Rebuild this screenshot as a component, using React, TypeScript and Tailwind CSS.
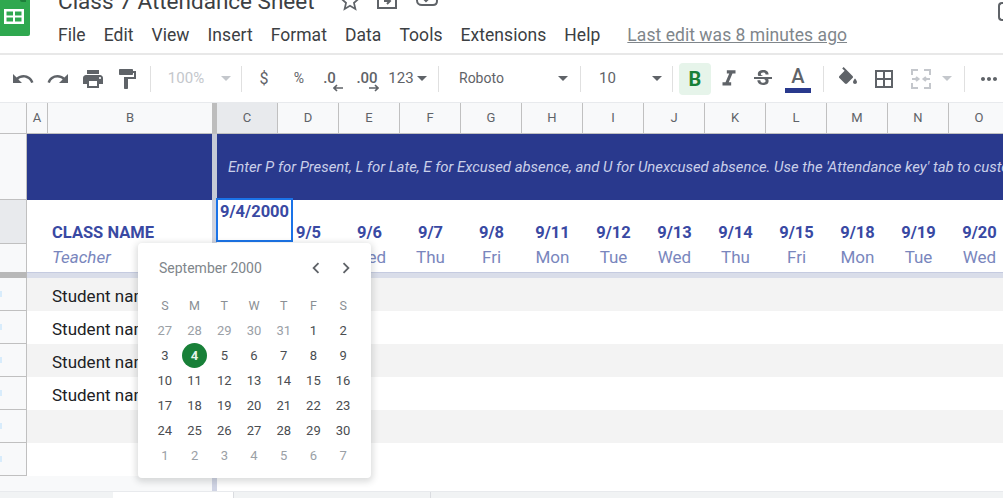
import React from 'react';
import {
    MdBorderAll,
    MdChevronLeft,
    MdChevronRight,
    MdFormatItalic,
    MdFormatPaint,
    MdMoreHoriz,
    MdPrint,
    MdRedo,
    MdStarBorder,
    MdStrikethroughS,
    MdUndo,
} from 'react-icons/md';

const columns = ['C', 'D', 'E', 'F', 'G', 'H', 'I', 'J', 'K', 'L', 'M', 'N', 'O'];

const dates = [
    ['', ''],
    ['9/5', 'Tue'],
    ['9/6', 'Wed'],
    ['9/7', 'Thu'],
    ['9/8', 'Fri'],
    ['9/11', 'Mon'],
    ['9/12', 'Tue'],
    ['9/13', 'Wed'],
    ['9/14', 'Thu'],
    ['9/15', 'Fri'],
    ['9/18', 'Mon'],
    ['9/19', 'Tue'],
    ['9/20', 'Wed'],
];

const rows = ['Student name', 'Student name', 'Student name', 'Student name', '', ''];

const menu = ['File', 'Edit', 'View', 'Insert', 'Format', 'Data', 'Tools', 'Extensions', 'Help'];

const weeks = [
    [27, 28, 29, 30, 31, 1, 2],
    [3, 4, 5, 6, 7, 8, 9],
    [10, 11, 12, 13, 14, 15, 16],
    [17, 18, 19, 20, 21, 22, 23],
    [24, 25, 26, 27, 28, 29, 30],
    [1, 2, 3, 4, 5, 6, 7],
];

function Caret({ light }: { light?: boolean }) {
    return (
        <span
            className={`block h-0 w-0 border-x-[5px] border-t-[5px] border-x-transparent ${
                light ? 'border-t-[#c4c7cc]' : 'border-t-[#5f6368]'
            }`}
        />
    );
}

function Sep({ className }: { className: string }) {
    return <div className={`h-[26px] w-px shrink-0 bg-[#e0e0e0] ${className}`} />;
}

function Logo() {
    return (
        <svg width="31" height="37" viewBox="0 0 31 37" className="shrink-0">
            <path d="M0 0H30V34Q30 36 28 36H0Z" fill="#2fa84f" />
            <path d="M20 0H26V2H22Q20 2 20 0Z" fill="#1e7e3a" />
            <path fillRule="evenodd" d="M4 9H24V24H4ZM6.5 11.5V15.5H13V11.5ZM15 11.5V15.5H21.5V11.5ZM6.5 17.5V21.5H13V17.5ZM15 17.5V21.5H21.5V17.5Z" fill="#fff" />
        </svg>
    );
}

function Toolbar() {
    const icon = 'flex shrink-0 items-center justify-center text-[#5f6368]';
    return (
        <div className="flex h-[48px] items-center border-b border-[#e8eaed] pl-[5px] text-[#5f6368]">
            <div className={`${icon} w-[35px]`}><MdUndo size={24} /></div>
            <div className={`${icon} w-[35px]`}><MdRedo size={24} /></div>
            <div className={`${icon} w-[35px]`}><MdPrint size={24} /></div>
            <div className={`${icon} w-[34px]`}><MdFormatPaint size={24} /></div>
            <Sep className="ml-[6px]" />
            <div className="w-[70px] shrink-0 text-center text-[15px] text-[#c4c7cc]">100%</div>
            <div className="flex w-[10px] shrink-0 justify-center"><Caret light /></div>
            <Sep className="ml-[10px]" />
            <div className="w-[44px] shrink-0 text-center text-[16px]">$</div>
            <div className="w-[26px] shrink-0 text-center text-[14px]">%</div>
            <div className="relative w-[35px] shrink-0 text-center text-[15px] font-medium">
                .0
                <svg width="10" height="8" viewBox="0 0 10 8" className="absolute left-[21px] top-[17px]">
                    <path d="M10 4H2M4 1L1 4L4 7" fill="none" stroke="#5f6368" strokeWidth="1.6" />
                </svg>
            </div>
            <div className="relative w-[40px] shrink-0 text-center text-[15px] font-medium">
                .00
                <svg width="10" height="8" viewBox="0 0 10 8" className="absolute left-[22px] top-[17px]">
                    <path d="M0 4H8M6 1L9 4L6 7" fill="none" stroke="#5f6368" strokeWidth="1.6" />
                </svg>
            </div>
            <div className="w-[28px] shrink-0 text-center text-[15px]">123</div>
            <div className="flex w-[13px] shrink-0 justify-center"><Caret /></div>
            <Sep className="ml-[10px]" />
            <div className="w-[111px] shrink-0 pl-[20px] text-[14px] text-[#5f6368]">Roboto</div>
            <div className="flex w-[26px] shrink-0 justify-center"><Caret /></div>
            <Sep className="ml-[4px]" />
            <div className="w-[68px] shrink-0 pl-[18px] text-[15px]">10</div>
            <div className="flex w-[16px] shrink-0 justify-center"><Caret /></div>
            <Sep className="ml-[7px]" />
            <div className="ml-[6px] flex h-[32px] w-[32px] shrink-0 items-center justify-center rounded bg-[#e6f4ea] text-[20px] font-bold text-[#188038]">B</div>
            <div className={`${icon} w-[36px]`}><MdFormatItalic size={26} /></div>
            <div className={`${icon} w-[32px]`}><MdStrikethroughS size={24} /></div>
            <div className="flex w-[38px] shrink-0 flex-col items-center">
                <span className="text-[20px] font-medium leading-[24px]">A</span>
                <span className="h-[5px] w-[26px] bg-[#29398d]" />
            </div>
            <Sep className="ml-[6px]" />
            <div className={`${icon} ml-[6px] w-[36px]`}>
                <svg width="24" height="24" viewBox="0 0 24 24" fill="#5f6368">
                    <path d="M16.56 8.94L7.62 0 6.21 1.41l2.38 2.38-5.15 5.15c-.59.59-.59 1.54 0 2.12l5.5 5.5c.29.29.68.44 1.06.44s.77-.15 1.06-.44l5.5-5.5c.59-.58.59-1.53 0-2.12z" />
                    <path d="M19 11.5s-2 2.17-2 3.5c0 1.1.9 2 2 2s2-.9 2-2c0-1.33-2-3.5-2-3.5z" />
                </svg>
            </div>
            <div className={`${icon} w-[36px]`}><MdBorderAll size={24} /></div>
            <div className={`${icon} w-[38px]`}>
                <svg width="24" height="24" viewBox="0 0 24 24" fill="none" stroke="#c4c7cc" strokeWidth="2">
                    <path d="M3 8V3H9M15 3H21V8M3 16V21H9M15 21H21V16M3 12H9M7 10L9.5 12L7 14M21 12H15M17 10L14.5 12L17 14" />
                </svg>
            </div>
            <div className="flex w-[14px] shrink-0 justify-center"><Caret light /></div>
            <Sep className="ml-[10px]" />
            <div className={`${icon} ml-[12px] w-[24px]`}><MdMoreHoriz size={24} /></div>
        </div>
    );
}

function DatePopup() {
    return (
        <div className="absolute left-[138px] top-[243px] z-20 h-[235px] w-[233px] rounded bg-white shadow-[0_2px_6px_2px_rgba(60,64,67,0.18)]">
            <div className="flex h-[50px] items-center justify-between pl-[21px] pr-[10px] text-[#5f6368]">
                <span className="text-[14px] text-[#80868b]">September 2000</span>
                <div className="flex">
                    <div className="flex w-[30px] justify-center"><MdChevronLeft size={22} /></div>
                    <div className="flex w-[30px] justify-center"><MdChevronRight size={22} /></div>
                </div>
            </div>
            <div className="ml-[12px] grid w-[208px] grid-cols-7 text-center text-[13px] leading-[25px]">
                {['S', 'M', 'T', 'W', 'T', 'F', 'S'].map((d, i) => (
                    <div key={i} className="text-[12.5px] text-[#8a8f94]">{d}</div>
                ))}
                {weeks.map((week, w) =>
                    week.map((d, i) => {
                        const muted = w === 5 || (w === 0 && i < 5);
                        const picked = w === 1 && d === 4;
                        return (
                            <div key={`${w}-${i}`} className={`flex h-[25px] items-center justify-center ${muted ? 'text-[#9aa0a6]' : 'text-[#4a4d51]'}`}>
                                {picked ? (
                                    <span className="flex h-[25px] w-[25px] items-center justify-center rounded-full bg-[#188038] font-bold text-[#e6f4ea]">{d}</span>
                                ) : (
                                    d
                                )}
                            </div>
                        );
                    }),
                )}
            </div>
        </div>
    );
}

export default function App() {
    return (
        <div className="relative h-[498px] w-[1003px] overflow-hidden bg-white font-['Roboto',sans-serif]">
            {/* title + menu */}
            <div className="flex h-[55px] items-start border-b-2 border-[#e8e8e8]">
                <Logo />
                <div className="ml-[27px] flex flex-col">
                    <div className="-mt-[13px] flex h-[35px] items-start text-[#5f6368]">
                        <span className="text-[22.5px] leading-[28px] text-[#3c4043]">Class 7 Attendance Sheet</span>
                        <MdStarBorder size={26} className="ml-[22px] mt-[1px]" />
                        <svg width="24" height="24" viewBox="0 0 24 24" fill="none" stroke="#5f6368" strokeWidth="2" className="ml-[12px] mt-[1px]">
                            <path d="M3 5H10L12 7H21V20H3Z" />
                            <path d="M9 13H15M12 10L15 13L12 16" />
                        </svg>
                        <svg width="24" height="24" viewBox="0 0 24 24" fill="none" stroke="#5f6368" strokeWidth="2" className="ml-[16px] -mt-[1px]">
                            <path d="M7 19H18C21 19 22 17 22 15C22 12 20 11 18.5 11C18 7 15 5 12 5C9 5 7 7 6 9.500C3 10 2 12 2 14.500C2 17 4 19 7 19Z" />
                            <path d="M8.500 12.500L11 15L16 10.500" />
                        </svg>
                    </div>
                    <div className="mt-[1px] flex items-center gap-[18px] text-[17.5px] leading-[24px] tracking-[0.05px] text-[#3c4043]">
                        {menu.map((m) => (
                            <span key={m}>{m}</span>
                        ))}
                        <span className="ml-[9px] text-[#80868b] underline">Last edit was 8 minutes ago</span>
                    </div>
                </div>
                <div className="ml-auto mt-[2px] h-[19px] w-[5px] rounded-l border-y-2 border-l-2 border-[#5f6368]" />
            </div>

            <Toolbar />

            {/* column letters */}
            <div className="flex h-[31px] border-b border-[#c0c0c0] bg-[#f8f9fa] text-[13px] leading-[30px] text-[#5f6368]">
                <div className="w-[27px] shrink-0 border-r border-[#c0c0c0]" />
                <div className="w-[21px] shrink-0 border-r border-[#c0c0c0] text-center">A</div>
                <div className="w-[164px] shrink-0 text-center">B</div>
                <div className="w-[5px] shrink-0 bg-[#bdbdbd]" />
                {columns.map((c, i) => (
                    <div key={c} className={`w-[61px] shrink-0 border-r border-[#c0c0c0] text-center ${i === 0 ? 'bg-[#e8eaed]' : ''}`}>
                        {c}
                    </div>
                ))}
            </div>

            {/* banner */}
            <div className="flex h-[66px]">
                <div className="w-[27px] shrink-0 border-r border-b border-[#c0c0c0] bg-[#f8f9fa]" />
                <div className="w-[185px] shrink-0 bg-[#29398d]" />
                <div className="w-[5px] shrink-0 bg-[#c6cad6]" />
                <div className="min-w-0 flex-1 overflow-hidden whitespace-nowrap bg-[#29398d] pl-[11px] text-[14.9px] italic leading-[66px] text-[#c9cfe9]">
                    Enter P for Present, L for Late, E for Excused absence, and U for Unexcused absence. Use the 'Attendance key' tab to customize
                </div>
            </div>

            {/* frozen heading row */}
            <div className="flex h-[72px]">
                <div className="flex w-[27px] shrink-0 flex-col border-r border-[#c0c0c0]">
                    <div className="h-[44px] border-b border-[#c0c0c0] bg-[#e8eaed]" />
                    <div className="flex-1 bg-[#f8f9fa]" />
                </div>
                <div className="w-[185px] shrink-0 pl-[25px] pt-[21px]">
                    <div className="text-[16.5px] font-bold leading-[24px] text-[#3949a3]">CLASS NAME</div>
                    <div className="text-[17px] italic leading-[24px] text-[#7986bd]">Teacher</div>
                </div>
                <div className="w-[5px] shrink-0 bg-[#cfd3df]" />
                {dates.map(([d, day], i) => (
                    <div key={i} className="w-[61px] shrink-0 pt-[21px] text-center">
                        <div className="text-[16.5px] font-bold leading-[24px] text-[#3949a3]">{d}</div>
                        <div className="text-[17px] leading-[24px] text-[#7986bd]">{day}</div>
                    </div>
                ))}
            </div>

            {/* freeze line */}
            <div className="flex h-[6px]">
                <div className="w-[27px] shrink-0 bg-[#b8b8b8]" />
                <div className="flex-1 border-t border-[#c5cbe0] bg-[#d9dde9]" />
            </div>

            {/* student rows */}
            {rows.map((name, i) => (
                <div key={i} className="flex h-[33px]">
                    <div className="flex w-[27px] shrink-0 items-center border-r border-b border-[#c0c0c0] bg-[#f8f9fa]">
                        <span className="h-[6px] w-[2px] bg-[#d8ecfb]" />
                    </div>
                    <div className={`flex-1 overflow-hidden pl-[25px] text-[17px] leading-[36px] text-[#202124] ${i % 2 === 0 ? 'bg-[#f3f3f3]' : 'bg-white'}`}>
                        {name}
                    </div>
                </div>
            ))}

            {/* gap under the grid */}
            <div className="flex h-[15px]">
                <div className="w-[212px] shrink-0 bg-[#f8f9fa]" />
                <div className="w-[5px] shrink-0 bg-[#d0d4e4]" />
            </div>

            {/* sheet tabs */}
            <div className="flex h-[7px] border-t border-[#e8eaed] bg-[#f1f3f4]">
                <div className="ml-[113px] w-[121px] border-r border-[#dadce0] bg-white" />
                <div className="w-[197px] border-r border-[#dadce0]" />
            </div>

            {/* cell editor */}
            <div className="absolute left-[216px] top-[198px] z-10 h-[44px] w-[77px] border-2 border-[#1a73e8] bg-white pl-[2px] text-[16.5px] font-bold leading-[24px] text-[#3949a3]">
                9/4/2000
            </div>

            <DatePopup />
        </div>
    );
}
